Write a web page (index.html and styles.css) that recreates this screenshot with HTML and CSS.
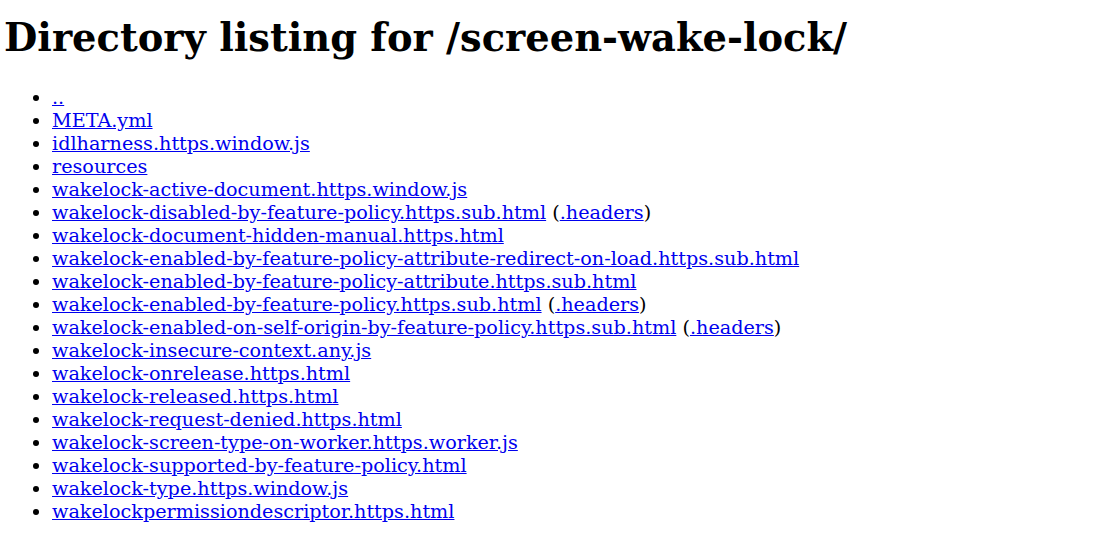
FILE: index.html
```html
<!DOCTYPE html>
<html>
<head>
<meta charset="utf-8">
<title>Directory listing for /screen-wake-lock/</title>
<link rel="stylesheet" href="styles.css">
</head>
<body class="page">
<h1 class="title">Directory listing for /screen-wake-lock/</h1>
<ul class="listing">
<li class="dir"><a href="#">..</a></li>
<li class="file"><a href="#">META.yml</a></li>
<li class="file"><a href="#">idlharness.https.window.js</a></li>
<li class="dir"><a href="#">resources</a></li>
<li class="file"><a href="#">wakelock-active-document.https.window.js</a></li>
<li class="file"><a href="#">wakelock-disabled-by-feature-policy.https.sub.html</a> (<a href="#">.headers</a>)</li>
<li class="file"><a href="#">wakelock-document-hidden-manual.https.html</a></li>
<li class="file"><a href="#">wakelock-enabled-by-feature-policy-attribute-redirect-on-load.https.sub.html</a></li>
<li class="file"><a href="#">wakelock-enabled-by-feature-policy-attribute.https.sub.html</a></li>
<li class="file"><a href="#">wakelock-enabled-by-feature-policy.https.sub.html</a> (<a href="#">.headers</a>)</li>
<li class="file"><a href="#">wakelock-enabled-on-self-origin-by-feature-policy.https.sub.html</a> (<a href="#">.headers</a>)</li>
<li class="file"><a href="#">wakelock-insecure-context.any.js</a></li>
<li class="file"><a href="#">wakelock-onrelease.https.html</a></li>
<li class="file"><a href="#">wakelock-released.https.html</a></li>
<li class="file"><a href="#">wakelock-request-denied.https.html</a></li>
<li class="file"><a href="#">wakelock-screen-type-on-worker.https.worker.js</a></li>
<li class="file"><a href="#">wakelock-supported-by-feature-policy.html</a></li>
<li class="file"><a href="#">wakelock-type.https.window.js</a></li>
<li class="file"><a href="#">wakelockpermissiondescriptor.https.html</a></li>
</ul>
</body>
</html>
```
FILE: styles.css
```css
.page {
  margin: 0 0 0 4px;
  font-family: "DejaVu Serif", serif;
  font-size: 19.2px;
  color: #000;
  background: #fff;
}
.title {
  font-family: "DejaVu Serif", serif;
  font-size: 38.4px;
  font-weight: bold;
  line-height: 44px;
  margin: 16px 0 0;
}
.listing {
  margin: 26px 0 0;
  padding-left: 48px;
  line-height: 23px;
}
.listing a {
  color: #0000ee;
}
```
